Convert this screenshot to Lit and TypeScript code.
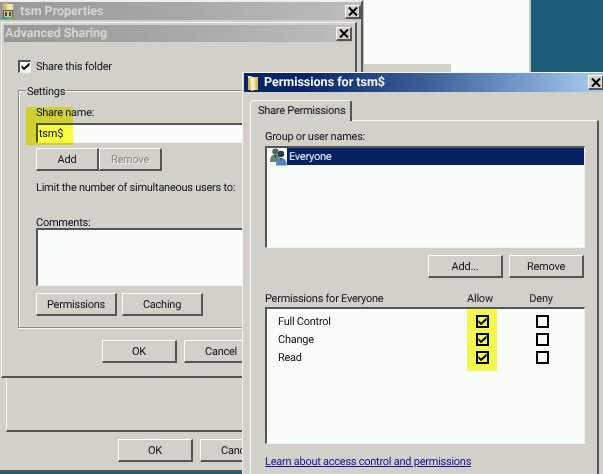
import { LitElement, html, css } from "lit";
import { customElement } from "lit/decorators.js";

const closeIcon = html`<svg width="10" height="9" viewBox="0 0 10 9"><path d="M1 0.5 L9 8.5 M9 0.5 L1 8.5" stroke="#000" stroke-width="2" fill="none"/></svg>`;

const folderIcon = html`<svg width="12" height="16" viewBox="0 0 12 16">
  <path d="M1 1 L5 1 L5 15 L1 15 Z" fill="#d8b24e"/>
  <path d="M1 1 L4 1 L4 3 L1 3 Z" fill="#f3e3a2"/>
  <path d="M5 2 L11 2 L11 15 L5 15 Z" fill="#e9cf7b"/>
  <path d="M3 3 L7 2 L8 15 L4 16 Z" fill="#f8eebc"/>
  <path d="M9 3 H11 V15 H9 Z" fill="#dcbc62"/>
</svg>`;

const propsIcon = html`<svg width="12" height="16" viewBox="0 0 12 16">
  <path d="M1 0 H5 V7 H1 Z" fill="#d6bb69"/>
  <path d="M5 1 H11 V8 H5 Z" fill="#efe3b0"/>
  <rect x="1.5" y="7.5" width="9" height="7" fill="#cfc98f" stroke="#55554a"/>
  <path d="M3 10 H5 M7 10 H9 M3 12 H5 M7 12 H9" stroke="#222" stroke-width="1.3"/>
  <path d="M0 15 H5" stroke="#2f9fae" stroke-width="2"/>
  <path d="M5 15 H12" stroke="#70b060" stroke-width="2"/>
</svg>`;

const usersIcon = html`<svg width="17" height="18" viewBox="0 0 17 18">
  <circle cx="5.5" cy="3.6" r="3.2" fill="#56635e"/>
  <path d="M0 14 C0 8 2.5 6.5 5.5 6.5 C8.5 6.5 10 8 10 14 Z" fill="#5d8a75"/>
  <path d="M4.5 7 L5.5 11 L6.5 7 Z" fill="#2c3d36"/>
  <circle cx="11" cy="6" r="3.2" fill="#2c3842"/>
  <path d="M6 17.5 C6 12.5 8 10 11 10 C14.5 10 16.8 12.5 16.8 17.5 Z" fill="#5583c6"/>
  <path d="M10.2 10 L11 13 L11.8 10 Z" fill="#22365e"/>
</svg>`;

const checkMark = html`<svg class="tick" width="9" height="9" viewBox="0 0 9 9"><path d="M0.5 3 L3 5.5 L8.5 0.5 V3.4 L3 8.2 L0.5 5.7 Z" fill="#0a0a0a"/></svg>`;

@customElement("app-root")
export class AppRoot extends LitElement {
  static styles = css`
    :host {
      display: block;
      width: 603px;
      height: 474px;
      font-family: Roboto, "Liberation Sans", Arial, sans-serif;
      font-size: 11px;
      letter-spacing: -0.25px;
      text-rendering: geometricPrecision;
      color: #12121e;
    }
    * { box-sizing: border-box; }
    .desktop {
      position: relative;
      width: 603px;
      height: 474px;
      overflow: hidden;
      background: #1c5d78;
    }
    .win {
      position: absolute;
      background: #d1d0c9;
    }
    .backpane {
      left: 361px; top: 0; width: 170px; height: 90px;
      background: #f8fdf9;
      border-left: 3px solid #c4c3bc;
      border-right: 2px solid #c4c3bc;
    }
    .backbar {
      width: 87px; height: 26px; margin-top: 64px;
      background: #d1d0c9;
    }
    .props {
      left: 0; top: 0; width: 363px; height: 472px;
      border-top: 2px solid #efefea;
      border-right: 2px solid #555;
      border-bottom: 2px solid #555;
      display: flex; flex-direction: column;
    }
    .title {
      flex: none;
      display: flex; align-items: center;
      font-family: Roboto, "Liberation Sans", sans-serif;
      font-weight: 700;
      font-size: 12.6px;
      letter-spacing: -0.05px;
      white-space: nowrap;
    }
    .title.off {
      color: #d6d6d0;
      background-color: #a4a4a2;
      background-image: linear-gradient(90deg, #989896 0%, #a8a8a6 50%, #bdbdbb 100%);
    }
    .propstitle {
      height: 18px; padding-left: 2px; gap: 6px;
    }
    .propsbottom {
      flex: 1; display: flex; flex-direction: column;
      margin-top: 357px; padding-left: 6px;
    }
    .propspanel {
      flex: none;
      height: 55px; width: 350px;
      border-left: 1px solid #f6f6f2;
      border-bottom: 2px solid #555;
    }
    .propsactions {
      display: flex; gap: 7px; padding: 7px 0 0 112px;
    }
    .close {
      flex: none;
      width: 16px; height: 14px;
      margin-left: auto;
      display: flex; align-items: center; justify-content: center;
      background: #d1d0c9;
      border-top: 1px solid #fff;
      border-left: 1px solid #fff;
      border-right: 2px solid #555;
      border-bottom: 2px solid #555;
    }
    .propstitle .close { margin-right: 0; margin-top: 2px; }
    .adv {
      left: 1px; top: 22px; width: 356px; height: 356px;
      border-top: 1px solid #f4f4f0;
      border-left: 1px solid #f4f4f0;
      border-right: 2px solid #555;
      border-bottom: 2px solid #555;
      padding: 2px 0 0 2px;
      display: flex; flex-direction: column;
    }
    .advtitle {
      height: 17px; margin-right: 3px; padding-left: 1px;
    }
    .checkrow {
      flex: none;
      display: flex; align-items: center; gap: 5px;
      margin: 17px 0 0 14px; height: 14px;
    }
    .cb {
      flex: none; width: 13px; height: 13px;
      display: flex; align-items: center; justify-content: center;
      background: #f8fdf9;
      border-top: 2px solid #555;
      border-left: 2px solid #555;
      border-right: 1px solid #eee;
      border-bottom: 1px solid #eee;
    }
    .group {
      flex: none;
      position: relative;
      margin: 17px 0 0 14px;
      width: 340px; height: 238px;
      border: 1px solid #8a8a86;
      border-right: none;
      box-shadow: inset 1px 1px 0 #f8f8f4, 0 1px 0 #f8f8f4;
      padding: 14px 0 0 17px;
      display: flex; flex-direction: column;
    }
    .legend {
      position: absolute; left: 7px; top: -6px;
      background: #d1d0c9; padding: 0 1px;
      line-height: 14px;
    }
    .lab { line-height: 14px; white-space: nowrap; padding-top: 1px; margin-bottom: -1px; }
    .field {
      flex: none;
      background: #f8fdf9;
      border-top: 2px solid #555;
      border-left: 2px solid #555;
      border-bottom: 1px solid #f2f2ee;
      padding-left: 1px;
      width: 320px;
    }
    .namefield {
      height: 20px; margin-top: 4px; line-height: 18px;
    }
    .hl {
      position: absolute;
      background: #ffff40;
      mix-blend-mode: multiply;
      pointer-events: none;
    }
    .hlname { left: 7px; top: 16px; width: 47px; height: 38px; }
    .btn {
      flex: none;
      display: flex; align-items: center; justify-content: center;
      height: 23px;
      background: #d1d0c9;
      border-top: 1px solid #fbfbf8;
      border-left: 1px solid #fbfbf8;
      border-right: 2px solid #555;
      border-bottom: 2px solid #555;
      white-space: nowrap;
    }
    .btn.dis { color: #87877f; text-shadow: 1px 1px 0 #f6f6f2; }
    .b63 { width: 63px; }
    .b81 { width: 81px; }
    .b75 { width: 75px; }
    .row { display: flex; flex: none; }
    .sharebtns { gap: 0; margin-top: 5px; }
    .limit { margin-top: 9px; }
    .comments { margin-top: 21px; margin-bottom: -2px; }
    .area { height: 58px; margin-top: 0; }
    .procbtns { gap: 5px; margin-top: 7px; }
    .advactions { display: flex; gap: 7px; margin: 12px 0 0 98px; }
    .perm {
      left: 242px; top: 72px; width: 400px; height: 420px;
      border-top: 1px solid #f4f4f0;
      border-left: 1px solid #f4f4f0;
      display: flex; flex-direction: column;
    }
    .permtitle {
      height: 19px; margin-left: 1px; width: 360px;
      padding-left: 3px; gap: 5px;
      color: #f4f7fa;
      background: linear-gradient(90deg, #0a2468 0%, #0a2468 16%, #3f6299 52%, #7ba0cf 80%, #a6caee 98%);
    }
    .permtitle .close { margin-right: 0; width: 16px; height: 15px; }
    .tabwrap { flex: none; padding: 8px 0 0 7px; display: flex; flex-direction: column; }
    .tab {
      flex: none;
      width: 102px; height: 21px;
      margin-bottom: -1px;
      position: relative; z-index: 1;
      background: #d1d0c9;
      border-top: 1px solid #f8f8f4;
      border-left: 1px solid #f8f8f4;
      border-right: 2px solid #555;
      border-radius: 3px 3px 0 0;
      padding-left: 7px;
      line-height: 19px;
      white-space: nowrap;
    }
    .panel {
      flex: none;
      width: 349px; height: 380px;
      border-top: 1px solid #f8f8f4;
      border-left: 1px solid #f8f8f4;
      border-right: 2px solid #555;
      padding: 8px 0 0 14px;
      display: flex; flex-direction: column;
    }
    .list {
      flex: none;
      position: relative;
      width: 320px;
      background: #f8fdf9;
      border-top: 2px solid #555;
      border-left: 2px solid #555;
      border-right: 1px solid #f2f2ee;
      border-bottom: 1px solid #f2f2ee;
    }
    .userlist { height: 102px; margin-top: 3px; padding: 0 0 0 3px; }
    .userrow { display: flex; align-items: flex-start; height: 18px; }
    .userrow svg { flex: none; }
    .sel {
      flex: 1; height: 17px; line-height: 17px; padding-left: 2px;
      background: #062263; color: #eef2f6;
    }
    .listbtns { gap: 6px; margin: 7px 0 0 163px; }
    .permhead {
      flex: none;
      display: grid; grid-template-columns: 180px 70px 52px;
      margin-top: 14px; margin-bottom: -1px; line-height: 14px;
    }
    .permhead span:nth-child(2), .permhead span:nth-child(3) { text-align: center; }
    .permlist { height: 137px; margin-top: 2px; padding-top: 3px; }
    .permrow {
      position: relative;
      display: grid; grid-template-columns: 174px 60px 60px;
      align-items: center;
      height: 18px;
      padding-left: 11px;
    }
    .permrow .box { justify-self: center; }
    .box {
      width: 13px; height: 13px;
      border: 2px solid #000;
      display: flex; align-items: center; justify-content: center;
    }
    .tick { display: block; }
    .hlallow {
      left: 200px; top: 0; width: 30px; height: 62px;
      background: #fafa50;
    }
    .permrow > * { position: relative; }
    .link {
      margin-top: 11px; color: #14149a; text-decoration: underline;
      line-height: 14px; white-space: nowrap;
    }
  `;

  render() {
    return html`
      <div class="desktop">
        <div class="win backpane"><div class="backbar"></div></div>

        <div class="win props">
          <div class="title off propstitle">${propsIcon}<span>tsm Properties</span><div class="close">${closeIcon}</div></div>
          <div class="propsbottom">
            <div class="propspanel"></div>
            <div class="propsactions">
              <div class="btn b75">OK</div>
              <div class="btn b75">Cancel</div>
            </div>
          </div>
        </div>

        <div class="win adv">
          <div class="title off advtitle"><span>Advanced Sharing</span><div class="close">${closeIcon}</div></div>
          <div class="checkrow"><div class="cb">${checkMark}</div><span>Share this folder</span></div>
          <div class="group">
            <span class="legend">Settings</span>
            <span class="lab">Share name:</span>
            <div class="field namefield">tsm$</div>
            <div class="hl hlname"></div>
            <div class="row sharebtns">
              <div class="btn b63">Add</div>
              <div class="btn b63 dis">Remove</div>
            </div>
            <span class="lab limit">Limit the number of simultaneous users to:</span>
            <span class="lab comments">Comments:</span>
            <div class="field area"></div>
            <div class="row procbtns">
              <div class="btn b81">Permissions</div>
              <div class="btn b81">Caching</div>
            </div>
          </div>
          <div class="advactions">
            <div class="btn b75">OK</div>
            <div class="btn b75">Cancel</div>
          </div>
        </div>

        <div class="win perm">
          <div class="title permtitle">${folderIcon}<span>Permissions for tsm$</span><div class="close">${closeIcon}</div></div>
          <div class="tabwrap">
            <div class="tab">Share Permissions</div>
            <div class="panel">
              <span class="lab">Group or user names:</span>
              <div class="list userlist">
                <div class="userrow">${usersIcon}<div class="sel">Everyone</div></div>
              </div>
              <div class="row listbtns">
                <div class="btn b75">Add...</div>
                <div class="btn b75">Remove</div>
              </div>
              <div class="permhead"><span>Permissions for Everyone</span><span>Allow</span><span>Deny</span></div>
              <div class="list permlist">
                <div class="hl hlallow"></div>
                ${["Full Control", "Change", "Read"].map(
                  (n) => html`<div class="permrow"><span>${n}</span><div class="box">${checkMark}</div><div class="box"></div></div>`
                )}
              </div>
              <span class="link">Learn about access control and permissions</span>
            </div>
          </div>
        </div>
      </div>
    `;
  }
}
